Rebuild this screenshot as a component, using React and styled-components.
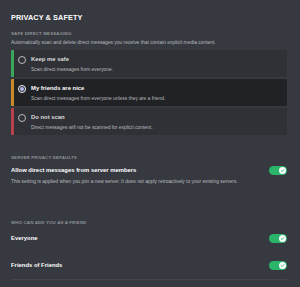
import styled, { createGlobalStyle } from 'styled-components'

const GlobalStyle = createGlobalStyle`
    html, body {
        margin: 0;
        padding: 0;
        background-color: #36393f;
    }
    body {
        font-family: 'Liberation Sans', Arial, sans-serif;
        -webkit-font-smoothing: antialiased;
    }
`

const Page = styled.div`
    width: 300px;
    height: 287px;
    box-sizing: border-box;
    padding: 13px 13px 0 11px;
    background-color: #36393f;
    overflow: hidden;
`

const Title = styled.h2`
    margin: 0 0 8px;
    font-size: 7.3px;
    line-height: 10px;
    font-weight: 700;
    color: #ffffff;
    letter-spacing: 0.1px;
`

const SectionHeader = styled.h5`
    margin: 0;
    margin-top: ${(p) => p.$top || 0}px;
    font-size: 4.4px;
    line-height: 6px;
    font-weight: 700;
    text-transform: uppercase;
    letter-spacing: 0.15px;
    color: #8e9297;
`

const Desc = styled.div`
    margin-top: ${(p) => p.$top || 0}px;
    font-size: 4.9px;
    line-height: 7px;
    color: #b9bbbe;
    white-space: nowrap;
`

const RadioGroup = styled.div`
    margin-top: 4px;
    display: flex;
    flex-direction: column;
    gap: 2px;
`

const RadioBox = styled.div`
    height: 27px;
    box-sizing: border-box;
    display: flex;
    align-items: flex-start;
    padding: 5px 0 0 4px;
    border-left: 3px solid ${(p) => p.$color};
    border-radius: 1px;
    background-color: ${(p) => (p.$selected ? '#202225' : '#2f3136')};
`

const Radio = styled.div`
    width: 8px;
    height: 8px;
    box-sizing: border-box;
    margin-top: 0.5px;
    margin-right: 5px;
    border-radius: 50%;
    border: 1.2px solid ${(p) => (p.$selected ? '#ffffff' : '#b9bbbe')};
    display: flex;
    align-items: center;
    justify-content: center;

    &::after {
        content: '';
        display: ${(p) => (p.$selected ? 'block' : 'none')};
        width: 4px;
        height: 4px;
        border-radius: 50%;
        background-color: #b5b8f2;
    }
`

const RadioText = styled.div`
    display: flex;
    flex-direction: column;
`

const RadioLabel = styled.div`
    font-size: 5.9px;
    line-height: 8px;
    font-weight: 700;
    color: ${(p) => (p.$selected ? '#ffffff' : '#dcddde')};
`

const RadioSub = styled.div`
    margin-top: 3px;
    font-size: 4.9px;
    line-height: 7px;
    color: #b9bbbe;
    white-space: nowrap;
`

const SwitchRow = styled.div`
    margin-top: ${(p) => p.$top || 0}px;
    height: 10px;
    display: flex;
    align-items: center;
    justify-content: space-between;
`

const SwitchLabel = styled.div`
    font-size: 5.9px;
    line-height: 10px;
    font-weight: 700;
    color: #ffffff;
`

const Track = styled.div`
    width: 18px;
    height: 9px;
    box-sizing: border-box;
    padding: 1px;
    border-radius: 5px;
    background-color: #2bb56a;
    display: flex;
    justify-content: flex-end;
    align-items: center;
`

const Knob = styled.div`
    width: 7px;
    height: 7px;
    border-radius: 50%;
    background-color: #ffffff;
    display: flex;
    align-items: center;
    justify-content: center;
`

const Divider = styled.div`
    margin-top: ${(p) => p.$top || 0}px;
    height: 1px;
    background-color: #42454b;
`

const Toggle = () => (
    <Track>
        <Knob>
            <svg width="5" height="5" viewBox="0 0 10 10">
                <path d="M2.2 5.2 L4.2 7.1 L7.9 3" fill="none" stroke="#2bb56a" strokeWidth="1.8" strokeLinecap="round" strokeLinejoin="round" />
            </svg>
        </Knob>
    </Track>
)

const options = [
    { label: 'Keep me safe', sub: 'Scan direct messages from everyone.', color: '#3ba55c' },
    { label: 'My friends are nice', sub: 'Scan direct messages from everyone unless they are a friend.', color: '#c98b26', selected: true },
    { label: 'Do not scan', sub: 'Direct messages will not be scanned for explicit content.', color: '#b8424c' },
]

const App = () => {
    return (
        <Page>
            <GlobalStyle />
            <Title>PRIVACY &amp; SAFETY</Title>
            <SectionHeader>Safe direct messaging</SectionHeader>
            <Desc $top={2}>Automatically scan and delete direct messages you receive that contain explicit media content.</Desc>
            <RadioGroup>
                {options.map((o) => (
                    <RadioBox key={o.label} $color={o.color} $selected={o.selected}>
                        <Radio $selected={o.selected} />
                        <RadioText>
                            <RadioLabel $selected={o.selected}>{o.label}</RadioLabel>
                            <RadioSub>{o.sub}</RadioSub>
                        </RadioText>
                    </RadioBox>
                ))}
            </RadioGroup>

            <SectionHeader $top={20}>Server privacy defaults</SectionHeader>
            <SwitchRow $top={4}>
                <SwitchLabel>Allow direct messages from server members</SwitchLabel>
                <Toggle />
            </SwitchRow>
            <Desc $top={3}>This setting is applied when you join a new server. It does not apply retroactively to your existing servers.</Desc>

            <SectionHeader $top={35}>Who can add you as a friend</SectionHeader>
            <SwitchRow $top={7}>
                <SwitchLabel>Everyone</SwitchLabel>
                <Toggle />
            </SwitchRow>
            <SwitchRow $top={17}>
                <SwitchLabel>Friends of Friends</SwitchLabel>
                <Toggle />
            </SwitchRow>
            <Divider $top={9} />
        </Page>
    )
}

export default App
